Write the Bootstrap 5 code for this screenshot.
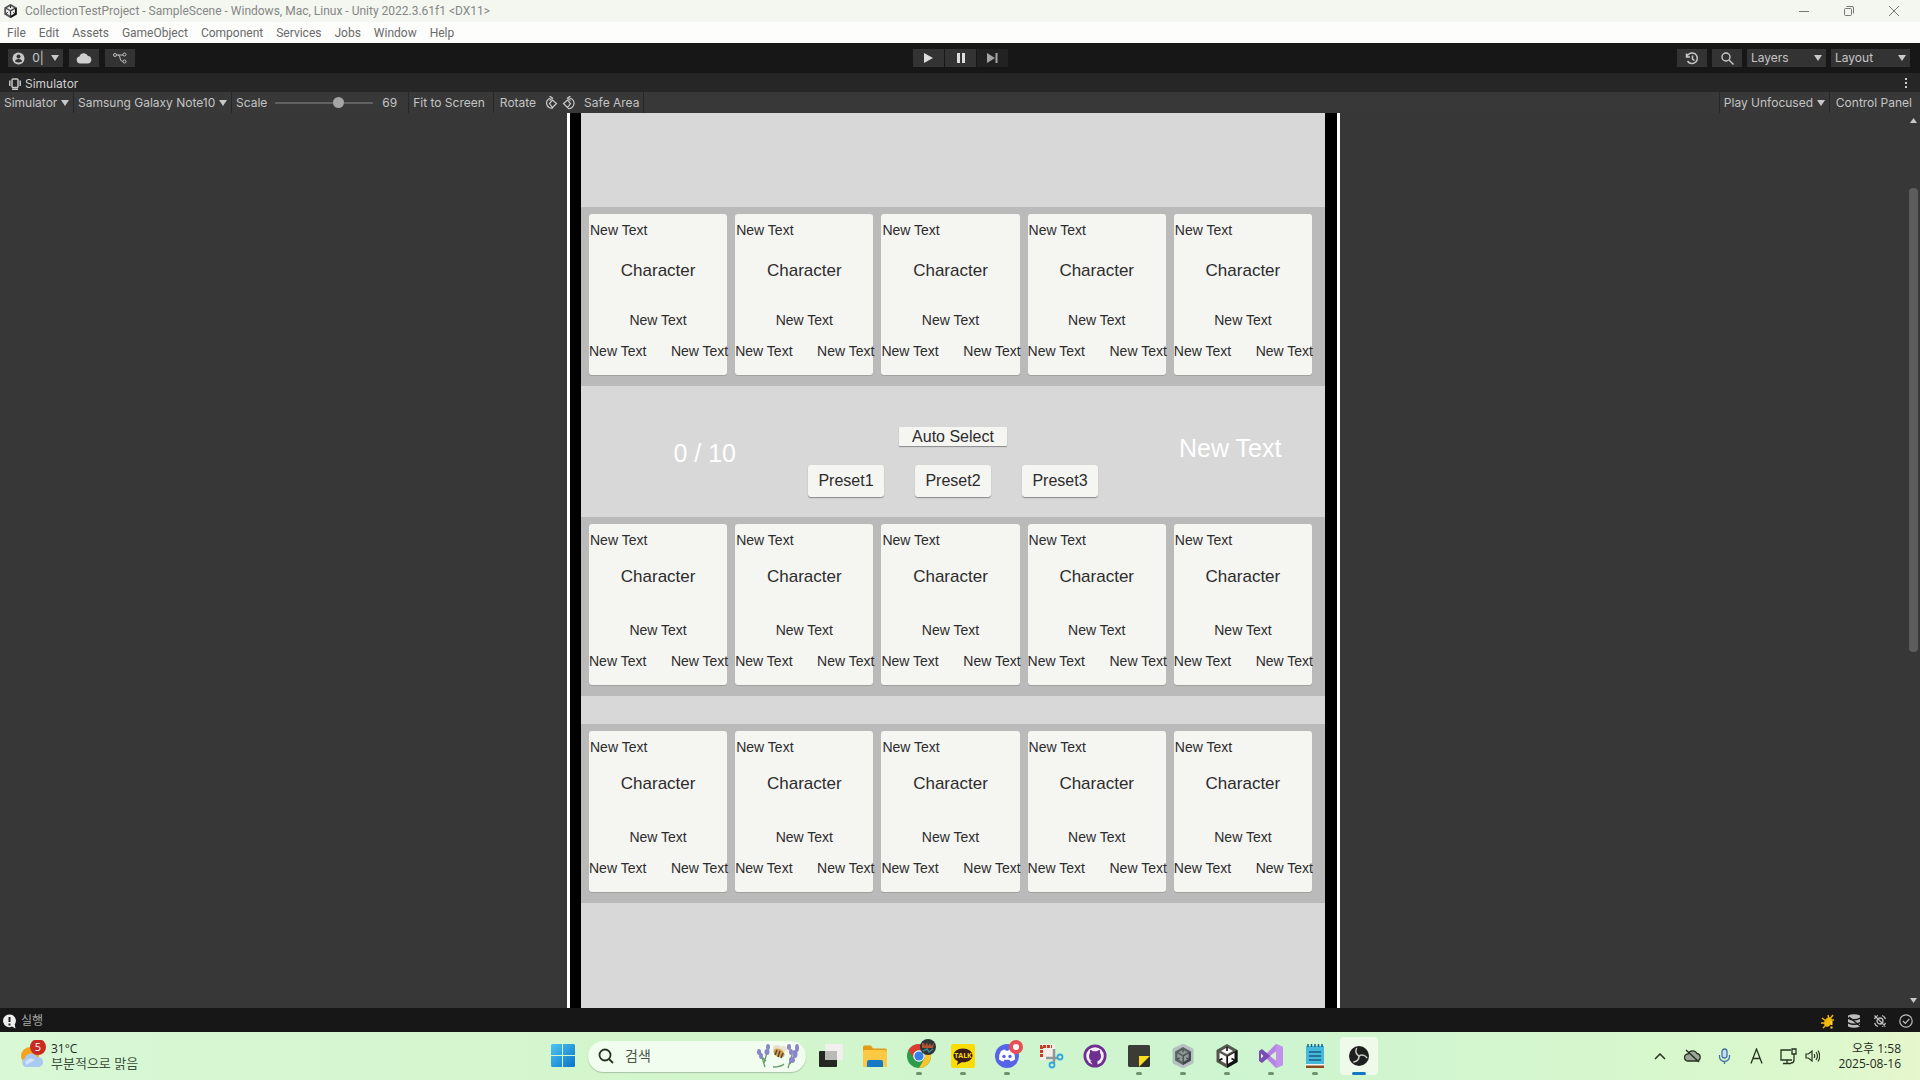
<!DOCTYPE html>
<html lang="ko">
<head>
<meta charset="utf-8">
<meta name="viewport" content="width=device-width, initial-scale=1">
<title>CollectionTestProject - SampleScene - Unity</title>
<link href="https://cdn.jsdelivr.net/npm/bootstrap@5.3.0/dist/css/bootstrap.min.css" rel="stylesheet">
<style>
body{font-family:Inter,"Noto Sans CJK KR",sans-serif;font-size:12px;line-height:16px;background:#373737;color:#c4c4c4}
svg{display:block;flex:none}
button,select{font:inherit;color:inherit;border:0;background:none;padding:0}
.win-font{font-family:"Open Sans","Noto Sans CJK KR",sans-serif}
.title-font{font-family:Roboto,"Noto Sans CJK KR",sans-serif}
.title-bar{height:22px;background:#f3f7f0;color:#868686}
.win-controls{gap:33px;padding-right:20px}
.menu-bar{height:21px;background:#fdfdfc;padding-left:7px;gap:13px}
.menu-bar a{color:#6a6a6a;text-decoration:none}
.editor-bar{height:30px;background:#171717;display:grid;grid-template-columns:1fr auto 1fr;align-items:center;padding:0 10px 0 8px}
.tool{height:18px;min-width:30px;background:#333333;display:flex;align-items:center;justify-content:center;color:#c8c8c8}
.tool.dim{background:#222;color:#999}
.tool.account{width:55px;padding:0 4px;justify-content:space-between}
.tool-group{gap:6px}
.tool-group.tight-group{gap:5px}
.play-tools{gap:1px;padding-left:3px}
.play-tools .tool{min-width:31px}
.pick{appearance:none;border-radius:0;background-image:url("data:image/svg+xml,%3Csvg xmlns='http://www.w3.org/2000/svg' width='8' height='6'%3E%3Cpath d='M0 0h8L4 6z' fill='%23c8c8c8'/%3E%3C/svg%3E");background-repeat:no-repeat;background-position:right 4px center}
.pick-box{width:79px;height:18px;background-color:#333333;padding-left:4px}
.tab-strip{height:19px;background:#262626;padding:2px 12px 0 9px;color:#cfcfcf}
.sim-bar{height:21px;background:#383838}
.sim-bar>*{height:21px;display:flex;align-items:center}
.sim-cell{padding:0 4px;border-right:1px solid #272727}
.sim-cell .pick{padding-right:11px;background-position:right 0 center}
.sim-scale{padding-right:11px}
.sim-rotate{padding:0 8px 0 6px}
.sim-scale input{appearance:none;width:98px;height:12px;background:linear-gradient(#606060,#606060) center/100% 2px no-repeat;margin:0 9px 0 8px}
.sim-scale input::-webkit-slider-thumb{appearance:none;width:11px;height:11px;border-radius:50%;background:#a5a5a5}
.sim-panel{padding:0 8px 0 6px}
.stage{background:#373737;min-height:0}
.device{max-width:773px;background:#000;border:solid #fff;border-width:0 3px;padding:0 12px 0 11px}
.screen-area{background:#d8d8d8;padding-top:94px;height:100%;font-family:"Liberation Sans",sans-serif;color:#2c2c2c}
.slot-row{background:#bababb;padding:7px 13px 11px 8px;gap:8px}
.slot-row+.slot-row{margin-top:28px}
.slot{flex:1 1 0;min-width:0;min-height:161px;background:#f5f5f2;border-radius:3px;box-shadow:0 1px 0 #a0a09c;padding:6px 0 14px;font-size:14px;line-height:20px;white-space:nowrap}
.slot-top{padding-left:1px}
.slot-name{font-size:17px;margin-top:17px}
.first-row .slot-name{margin-top:21px}
.slot-foot{margin-top:11px;margin-right:-1px}
.mid-zone{display:grid;grid-template-columns:1fr auto 1fr;height:131px;font-size:16px}
.big-text{font-size:25px;line-height:28px;color:#fff}
.count-text{padding:53px 72px 0 0}
.info-text{padding:48px 0 0 81px}
.ui-btn{background:#f5f5f2;border-radius:3px;box-shadow:0 1px 1px #8a8a8a;color:#2c2c2c}
.auto-btn{width:108px;height:19px;line-height:19px;border-radius:1px}
.preset-btn{width:76px;height:32px}
.mid-actions{padding-top:41px;gap:19px}
.preset-list{gap:31px}
.scroll-rail{width:13px;padding:5px 2px;color:#bbb}
.scroll-track{width:9px}
.scroll-thumb{height:53%;margin-top:65px;background:#5c5c5c;border-radius:4px}
.status-bar{height:24px;background:#171717;padding:2px 7px 0 3px;color:#a8a8a8}
.status-icons{gap:12px}
.task-bar{height:48px;background:linear-gradient(90deg,#d8f8d6,#d3f5cb 35%,#cdf5d0 65%,#dcf8cc 95%,#e6f6cd);display:grid;grid-template-columns:1fr auto 1fr;color:#1e2a1e}
.weather{padding-left:20px;gap:5px;line-height:15px}
.weather-note{font-size:13px;color:#3d4f3a}
.apps{padding-left:2px}
.app{width:44px;height:48px;display:flex;align-items:center;justify-content:center;position:relative}
.app.on::after{content:"";position:absolute;bottom:5px;left:19px;width:6px;height:3px;border-radius:2px;background:#71906e}
.app.active-app::before{content:"";position:absolute;inset:5px 3px;border-radius:4px;background:#effbea}
.app.active-app::after{width:14px;left:15px;background:#1478c4}
.app svg{position:relative}
.search-pill{width:218px;height:31px;border-radius:16px;background:#f1fdee;box-shadow:0 1px 1px #a9c4a5;padding:0 6px 0 10px;margin:0 3px;gap:11px}
.search-pill input{border:0;background:none;outline:0;padding:0;font-size:14px;color:#4a5548;min-width:0}
.search-pill input::placeholder{color:#4a5548;opacity:1}
.tray{padding-right:19px}
.tray-icon{width:32px;display:flex;justify-content:center}
.tray-icon.tight{width:16px}
.clock{line-height:15px;padding-left:18px}
.clock,.weather{font-size:12px}
</style>
<script src="https://cdn.jsdelivr.net/npm/bootstrap@5.3.0/dist/js/bootstrap.bundle.min.js"></script>
</head>
<body class="vh-100 d-flex flex-column overflow-hidden">
<svg width="0" height="0" class="position-absolute" aria-hidden="true">
  <symbol id="cube" viewBox="0 0 24 24"><path d="M12 0l10.500 6v12L12 24 1.500 18V6z" fill="var(--base)"/><path d="M22.500 6v12L12 24V12z" fill="var(--side)"/><path d="M12 3.500l6 3.400-6 3.400-6-3.400zM4.500 8.700l6.500 3.700v7.300l-6.500-3.700zM19.500 8.700L13 12.400v7.300l6.500-3.700z" fill="var(--face)"/><path d="M12 3v4M4 16.500l3.500-2M20 16.500l-3.500-2" stroke="var(--side)" stroke-width="1.600"/></symbol>
</svg>

<header>
  <div class="title-bar title-font d-flex align-items-center">
    <svg class="ms-1 me-2" width="13" height="16" viewBox="1 0 22 24" style="--base:#555;--side:#161616;--face:#eee"><use href="#cube" width="24" height="24"/></svg>
    <span class="flex-grow-1">CollectionTestProject - SampleScene - Windows, Mac, Linux - Unity 2022.3.61f1 &lt;DX11&gt;</span>
    <div class="win-controls d-flex align-items-center">
      <button aria-label="Minimize"><svg width="12" height="12" stroke="#777" fill="none"><path d="M1 6.500h10"/></svg></button>
      <button aria-label="Restore"><svg width="12" height="12" stroke="#777" fill="none"><rect x="1.500" y="3.500" width="7" height="7" rx="1"/><path d="M3.500 1.500H9a1.500 1.500 0 0 1 1.500 1.500v5.500"/></svg></button>
      <button aria-label="Close"><svg width="12" height="12" stroke="#777" fill="none"><path d="M1 1l10 10M11 1L1 11"/></svg></button>
    </div>
  </div>
  <nav class="menu-bar title-font d-flex align-items-center">
    <a href="#">File</a><a href="#">Edit</a><a href="#">Assets</a><a href="#">GameObject</a><a href="#">Component</a><a href="#">Services</a><a href="#">Jobs</a><a href="#">Window</a><a href="#">Help</a>
  </nav>
  <div class="editor-bar">
    <div class="tool-group d-flex">
      <button class="tool account"><svg width="13" height="13" viewBox="0 0 13 13"><circle cx="6.500" cy="6.500" r="6" fill="#c8c8c8"/><circle cx="6.500" cy="4.500" r="2" fill="#333"/><path d="M3 9.500q0-2.500 3.500-2.500t3.500 2.500q-3.500 2-7 0z" fill="#333"/></svg><span>0|</span><svg width="8" height="6"><path d="M0 0h8L4 6z" fill="#c8c8c8"/></svg></button>
      <button class="tool" aria-label="Cloud"><svg width="16" height="12" viewBox="0 0 16 12"><path d="M4 11.500a3.500 3.500 0 0 1-.6-6.900A4.600 4.600 0 0 1 12 4a3.800 3.800 0 0 1 .3 7.500z" fill="#d0d0d0"/></svg></button>
      <button class="tool" aria-label="Version control"><svg width="14" height="12" viewBox="0 0 14 12" fill="none" stroke="#c0c0c0"><circle cx="2" cy="3" r="1.500"/><circle cx="11.500" cy="2.500" r="1.500"/><circle cx="11.500" cy="9.500" r="1.500"/><path d="M3.500 3H10M5 3q2 0 2 3t3 3.500"/></svg></button>
    </div>
    <div class="play-tools d-flex">
      <button class="tool" aria-label="Play"><svg width="9" height="10"><path d="M0 0l9 5-9 5z" fill="#ddd"/></svg></button>
      <button class="tool" aria-label="Pause"><svg width="8" height="10"><path d="M0 0h3v10H0zM5 0h3v10H5z" fill="#ddd"/></svg></button>
      <button class="tool dim" aria-label="Step"><svg width="11" height="10"><path d="M0 0l8 5-8 5zM8.500 0h2v10h-2z" fill="#a5a5a5"/></svg></button>
    </div>
    <div class="tool-group tight-group d-flex justify-content-end">
      <button class="tool" aria-label="Undo history"><svg width="14" height="13" viewBox="0 0 14 13" fill="none" stroke="#c8c8c8" stroke-width="1.500"><path d="M2 4.500A5.300 5.300 0 1 1 2.500 9M1.500 1.500v3.500H5M7.500 3.500v3.500l2 1.500"/></svg></button>
      <button class="tool" aria-label="Search"><svg width="13" height="13" viewBox="0 0 13 13" fill="none" stroke="#c8c8c8" stroke-width="1.400"><circle cx="5" cy="5" r="4"/><path d="M8 8l4.500 4.500"/></svg></button>
      <select class="pick pick-box" aria-label="Layers"><option>Layers</option></select>
      <select class="pick pick-box" aria-label="Layout"><option>Layout</option></select>
    </div>
  </div>
  <div class="tab-strip d-flex align-items-center justify-content-between">
    <div class="d-flex align-items-center gap-1"><svg width="12" height="12" viewBox="0 0 12 12" fill="none" stroke="#c8c8c8" stroke-width="1.500"><rect x="3" y="1" width="6" height="8.500" rx="1"/><path d="M.8 2.500v5.500M11.200 2.500v5.500M3 11.200h6"/></svg><span>Simulator</span></div>
    <button aria-label="More"><svg width="3" height="11" fill="#ccc"><path d="M0 0h2v2H0zM0 4h2v2H0zM0 8h2v2H0z"/></svg></button>
  </div>
  <div class="sim-bar d-flex">
    <div class="sim-cell"><select class="pick" aria-label="View"><option>Simulator</option></select></div>
    <div class="sim-cell"><select class="pick" aria-label="Device"><option>Samsung Galaxy Note10</option></select></div>
    <div class="sim-cell sim-scale"><label for="scale">Scale</label><input id="scale" type="range" min="0" max="100" value="66"><span>69</span></div>
    <div class="sim-cell pe-2"><button>Fit to Screen</button></div>
    <div class="sim-rotate"><span class="me-2">Rotate</span>
      <button class="me-1" aria-label="Rotate right"><svg width="14" height="14" viewBox="0 0 14 14" fill="none" stroke="#c8c8c8" stroke-width="1.200"><path d="M6.500 2A5 5 0 1 0 9 12M5.500 0l3 2-3 2.500M8.500 4l4 3.500-4 4-3-4z"/></svg></button>
      <button aria-label="Rotate left"><svg width="14" height="14" viewBox="0 0 14 14" fill="none" stroke="#c8c8c8" stroke-width="1.200"><path d="M7.500 2A5 5 0 1 1 6 12.500M8.500 0l-3 2 3 2.500M5.500 4l-4 3.500 4 4 3-4z"/></svg></button></div>
    <div class="sim-cell ps-0"><button>Safe Area</button></div>
    <div class="sim-cell flex-grow-1"></div>
    <div class="sim-cell"><select class="pick" aria-label="Play mode"><option>Play Unfocused</option></select></div>
    <div class="sim-panel"><button>Control Panel</button></div>
  </div>
</header>

<main class="stage flex-grow-1 d-flex overflow-hidden">
  <div class="flex-grow-1 d-flex justify-content-center">
    <div class="device w-100">
      <div class="screen-area" id="screen">
        <section class="slot-row first-row d-flex"></section>
        <section class="mid-zone">
          <div class="big-text count-text text-end">0 / 10</div>
          <div class="mid-actions d-flex flex-column align-items-center">
            <button class="ui-btn auto-btn">Auto Select</button>
            <div class="preset-list d-flex"><button class="ui-btn preset-btn">Preset1</button><button class="ui-btn preset-btn">Preset2</button><button class="ui-btn preset-btn">Preset3</button></div>
          </div>
          <div class="big-text info-text">New Text</div>
        </section>
        <section class="slot-row d-flex"></section>
        <section class="slot-row d-flex"></section>
      </div>
    </div>
  </div>
  <div class="scroll-rail d-flex flex-column align-items-center">
    <svg width="7" height="5"><path d="M0 5h7L3.500 0z" fill="#c8c8c8"/></svg>
    <div class="scroll-track flex-grow-1"><div class="scroll-thumb"></div></div>
    <svg width="7" height="5"><path d="M0 0h7L3.500 5z" fill="#c8c8c8"/></svg>
  </div>
</main>

<footer>
  <div class="status-bar d-flex align-items-center justify-content-between">
    <div class="d-flex align-items-center gap-1"><svg width="14" height="15" viewBox="0 0 14 15"><path d="M6.500.5a6.300 6.300 0 1 0 2.500 12l3.500 2-.8-4A6.300 6.300 0 0 0 6.500.5z" fill="#eee"/><path d="M6.500 3v5M6.500 9.500v2" stroke="#222" stroke-width="2"/></svg><span>실행</span></div>
    <div class="status-icons d-flex align-items-center">
      <svg width="14" height="15" viewBox="0 0 14 15"><ellipse cx="7" cy="8" rx="3.500" ry="5" fill="#f5b80c" transform="rotate(25 7 8)"/><path d="M1 4l4 3M0 9h5M2 14l3-3M7 1l1 4M12 1l-3 4M13 6H9" stroke="#f5b80c" stroke-width="1.400"/><path d="M10.500 7v4M10.500 12.500v2" stroke="#ffd23c" stroke-width="2"/></svg>
      <svg width="14" height="14" viewBox="0 0 14 14"><path d="M1 1.500q6-2.500 12 0v2q-6 3-12 0zM1 5q6 3 12 0v3q-6 3-12 0zM1 9.500q6 3 12 0v3q-6 2.500-12 0z" fill="#bdbdbd"/><path d="M2 3l11 9" stroke="#171717" stroke-width="1.300"/></svg>
      <svg width="14" height="14" viewBox="0 0 14 14" fill="none" stroke="#bdbdbd" stroke-width="1.300"><path d="M1.500 5A6 6 0 0 1 5 1.500M9 1.500A6 6 0 0 1 12.500 5M12.500 9A6 6 0 0 1 9 12.500M5 12.500A6 6 0 0 1 1.500 9M1.500 1.500l11 11"/><circle cx="7" cy="7" r="3"/></svg>
      <svg width="14" height="14" viewBox="0 0 14 14" fill="none" stroke="#bdbdbd" stroke-width="1.200"><circle cx="7" cy="7" r="6.200"/><path d="M4 7l2.300 2.300L10.300 5"/></svg>
    </div>
  </div>

  <div class="task-bar win-font">
    <div class="weather d-flex align-items-center">
      <svg width="26" height="32" viewBox="0 0 26 32"><circle cx="10" cy="16" r="9" fill="#f5a31c"/><path d="M5 27a5 5 0 0 1 0-9 6.500 6.500 0 0 1 12-1 5 5 0 0 1 2 10z" fill="#a9c8f2"/><path d="M6 25a4 4 0 0 1 1-5 6 6 0 0 1 8 0" fill="#d2e3fa"/><circle cx="18" cy="7" r="8" fill="#c92b20"/><text x="18" y="11" text-anchor="middle" font-size="11" fill="#fff">5</text></svg>
      <div><div>31°C</div><div class="weather-note">부분적으로 맑음</div></div>
    </div>
    <div class="apps d-flex align-items-center">
      <button class="app" aria-label="Start"><svg width="24" height="24" viewBox="0 0 24 24"><defs><linearGradient id="w" x1="0" y1="0" x2="1" y2="1"><stop stop-color="#4fc5f2"/><stop offset="1" stop-color="#0a73c9"/></linearGradient></defs><path d="M1 0h10v11H0V1zM12 0h11l1 1v10H12zM0 12h11v11H1l-1-1zM12 12h12v10l-1 1H12z" fill="url(#w)"/></svg></button>
      <div class="search-pill d-flex align-items-center">
        <svg width="16" height="16" viewBox="0 0 16 16" fill="none" stroke="#26331f" stroke-width="1.800"><circle cx="7" cy="7" r="5.500"/><path d="M11 11l4 4"/></svg>
        <input class="flex-grow-1" type="search" placeholder="검색" aria-label="검색">
        <svg width="44" height="26" viewBox="0 0 44 26"><path d="M4 8l5 16M13 3L8 20M6 14l4 4M36 12l-4 13M41 6l-7 15M17 24q8 0 11-3" stroke="#6a9a6c" stroke-width="1.300" fill="none"/><g fill="#8c86c8"><ellipse cx="3" cy="9" rx="2" ry="3"/><ellipse cx="5" cy="13" rx="2" ry="3"/><ellipse cx="12" cy="4" rx="2" ry="3"/><ellipse cx="11" cy="9" rx="2.500" ry="3"/><ellipse cx="33" cy="4" rx="2" ry="3"/><ellipse cx="35" cy="9" rx="2" ry="3"/><ellipse cx="41" cy="5" rx="2" ry="4"/><ellipse cx="39" cy="11" rx="2.500" ry="4"/><ellipse cx="36" cy="17" rx="3" ry="3"/></g><ellipse cx="21" cy="5" rx="4" ry="3" fill="#e6dfcc"/><ellipse cx="27" cy="6" rx="4" ry="3" fill="#e9e3d2"/><ellipse cx="23" cy="10" rx="6" ry="4" fill="#d5a253" transform="rotate(30 23 10)"/><path d="M21 7l-2 5M24 8l-2 6M27 10l-2 5" stroke="#5d4330" stroke-width="1.500"/></svg>
      </div>
      <button class="app" aria-label="Task view"><svg width="26" height="24" viewBox="0 0 26 24"><rect x="7" y="0" width="18" height="16" rx="1" fill="#f3efee"/><rect x="1" y="7" width="18" height="16" rx="1" fill="#252722"/><rect x="7" y="7" width="12" height="9" fill="#b8bab8"/></svg></button>
      <button class="app" aria-label="File Explorer"><svg width="24" height="23" viewBox="0 0 24 23"><path d="M0 2q0-1.500 1.500-1.500H8l2 3h12q2 0 2 2V20q0 2-2 2H2q-2 0-2-2z" fill="#e49b12"/><path d="M0 7q0-2 2-2h20q2 0 2 2v13q0 2-2 2H2q-2 0-2-2z" fill="#fbc944"/><path d="M4 22v-5q0-2 2-2h12q2 0 2 2v5z" fill="#1478c4"/></svg></button>
      <button class="app on" aria-label="Chrome"><svg width="34" height="36" viewBox="0 0 34 36"><circle cx="17" cy="18" r="12" fill="#2b9c48"/><path d="M6.600 12A12 12 0 0 1 27.400 12H17a6 6 0 0 0-5.200 9z" fill="#de3b2e"/><path d="M27.400 12A12 12 0 0 1 17 30l5.200-9A6 6 0 0 0 17 12z" fill="#f8c52c"/><circle cx="17" cy="18" r="5.800" fill="#fff"/><circle cx="17" cy="18" r="4.600" fill="#357fe6"/><circle cx="26" cy="9" r="8" fill="#2d3536"/><path d="M20 5h2l1 3 2-4 1 4 2-3 1 3 3-3-1 5H20z" fill="#b0552f"/><path d="M21 13l4-2 2 3 4-3" stroke="#3d8890" stroke-width="1.500" fill="none"/></svg></button>
      <button class="app on" aria-label="KakaoTalk"><svg width="24" height="24" viewBox="0 0 24 24"><rect width="24" height="24" rx="2" fill="#fbdc06"/><path d="M12 4.500c-5.500 0-9.500 3-9.500 7 0 2.500 1.800 4.600 4.500 5.800L6 21l4.500-2.700c7 .3 11-2.800 11-6.800s-4-7-9.500-7z" fill="#3a1d18"/><text x="12" y="14" text-anchor="middle" font-size="7" font-weight="700" fill="#fbdc06">TALK</text></svg></button>
      <button class="app on" aria-label="Discord"><svg width="34" height="36" viewBox="0 0 34 36"><circle cx="17" cy="18" r="12" fill="#5564e8"/><path d="M11 13q2-1.500 4-1.500l.8 1.200h2.400l.8-1.200q2 0 4 1.500 2.500 4 2 8.500-2 1.600-4.500 2l-1-1.700h-5l-1 1.700q-2.500-.4-4.500-2-.5-4.500 2-8.500z" fill="#fff"/><circle cx="14" cy="18.500" r="1.700" fill="#5564e8"/><circle cx="20" cy="18.500" r="1.700" fill="#5564e8"/><circle cx="26" cy="9" r="5" fill="#fff" stroke="#e94e55" stroke-width="4"/></svg></button>
      <button class="app" aria-label="Snipping Tool"><svg width="26" height="26" viewBox="0 0 26 26"><rect x="2" y="1" width="15" height="16" fill="#f5ede8"/><path d="M3.500 14V3.500H14" stroke="#c93c1d" stroke-width="3" stroke-dasharray="3 1" fill="none"/><path d="M16 6v14M8 15h12" stroke="#8e9696" stroke-width="2.500"/><circle cx="22" cy="14" r="2.500" fill="none" stroke="#32a7dd" stroke-width="1.800"/><circle cx="14" cy="22" r="2.500" fill="none" stroke="#32a7dd" stroke-width="1.800"/></svg></button>
      <button class="app" aria-label="GitHub Desktop"><svg width="24" height="24" viewBox="0 0 24 24"><circle cx="12" cy="12" r="11.500" fill="#6e2f91"/><circle cx="12" cy="12" r="8.800" fill="#f5edf8"/><path d="M9.500 20.500V17q-3 .5-3.500-2M14.500 20.500V17q3.500-.8 3.500-5 0-2-1-3 .3-1.500-.2-3-1.300 0-2.800 1.200h-4Q8.500 6 7.200 6q-.5 1.500-.2 3-1 1-1 3 0 4.200 3.500 5v4h5z" fill="#6e2f91"/></svg></button>
      <button class="app on" aria-label="Sticky Notes"><svg width="22" height="22" viewBox="0 0 22 22"><path d="M1 0h20l1 1v10L11 22H1l-1-1V1z" fill="#3b3c35"/><path d="M11 11h11L11 22z" fill="#fbdc1c"/><path d="M22 11v10l-1 1H11z" fill="#2d2f29"/></svg></button>
      <button class="app on" aria-label="Unity Hub"><svg width="22" height="24" viewBox="0 0 22 24" style="--base:#59625f;--side:#3f474a;--face:#8f9a9c"><path d="M11 0l10 5v14l-10 5-10-5V5z" fill="#b4c0c1" stroke="#b4c0c1" stroke-linejoin="round"/><use href="#cube" x="2" y="3" width="18" height="18"/></svg></button>
      <button class="app on" aria-label="Unity"><svg width="24" height="24" viewBox="0 0 24 24" style="--base:#56574c;--side:#121212;--face:#f8f8f8"><use href="#cube" width="24" height="24"/></svg></button>
      <button class="app on" aria-label="Visual Studio"><svg width="24" height="24" viewBox="0 0 24 24"><path d="M17 0l7 3v18l-7 3L6 13v-2z" fill="#b583e6"/><path d="M0 7l3-2 14 12V7L3 19l-3-2z" fill="#7b4bb4"/><path d="M17 7v10l-6-5z" fill="#d8f0d0"/><path d="M17 0l7 3v18l-7 3z" fill="#c092ec"/><path d="M2 9.500v5L4.500 12z" fill="#d8f0d0"/></svg></button>
      <button class="app on" aria-label="Notepad"><svg width="20" height="24" viewBox="0 0 20 24"><rect x="1" y="2" width="18" height="20" fill="#45b8dc"/><path d="M1 21h18v3H1z" fill="#8d4a20"/><path d="M1 20h18v1.500H1z" fill="#f5f5f0"/><path d="M3 0v3M6.500 0v3M10 0v3M13.500 0v3M17 0v3M4 8h12M4 12h12M4 16h12" stroke="#155e80" stroke-width="1.500"/></svg></button>
      <button class="app on active-app" aria-label="OBS Studio"><svg width="22" height="22" viewBox="0 0 22 22"><defs><path id="blade" d="M11 11Q6.500 8.500 8.500 3.500"/></defs><circle cx="11" cy="11" r="10" fill="#1e1f1e"/><g stroke="#c4cac2" stroke-width="1.500" stroke-linecap="round" fill="none"><use href="#blade"/><use href="#blade" transform="rotate(120 11 11)"/><use href="#blade" transform="rotate(240 11 11)"/></g></svg></button>
    </div>
    <div class="tray d-flex align-items-center justify-content-end">
      <span class="tray-icon"><svg width="12" height="7" fill="none" stroke="#26331f" stroke-width="1.500"><path d="M1 6l5-5 5 5"/></svg></span>
      <span class="tray-icon"><svg width="17" height="14" viewBox="0 0 17 14"><path d="M4 12a3.500 3.500 0 0 1 0-7 5 5 0 0 1 9-.5 3.800 3.800 0 0 1 0 7.500z" fill="#9ca59a" stroke="#26331f" stroke-width="1.300"/><path d="M2 1l13 12" stroke="#26331f" stroke-width="1.500"/></svg></span>
      <span class="tray-icon"><svg width="13" height="17" viewBox="0 0 13 17" fill="none" stroke="#4272a5" stroke-width="1.300"><rect x="4" y="1" width="5" height="9" rx="2.500" fill="#c1dff0"/><path d="M1.500 7v1.500a5 5 0 0 0 10 0V7M6.500 13.500V16"/></svg></span>
      <span class="tray-icon"><svg width="13" height="16" viewBox="0 0 13 16" fill="none" stroke="#26331f" stroke-width="1.300"><path d="M1 15.500L6.500 1 12 15.500M3 10.500h7"/></svg></span>
      <span class="tray-icon"><svg width="17" height="17" viewBox="0 0 17 17" fill="none" stroke="#26331f" stroke-width="1.300"><path d="M11 2H1v10h11M3 15.500h8M7 12v3.500M14 6v6q0 3-3 3M12 1h4v5h-4z"/></svg></span>
      <span class="tray-icon tight"><svg width="15" height="14" viewBox="0 0 15 14" fill="none" stroke="#26331f" stroke-width="1.200"><path d="M1 5h2.500L7 2v10L3.500 9H1zM9 5q1.500 2 0 4M11 3q3 4 0 8M13 1.500q3.500 5.500 0 11"/></svg></span>
      <div class="clock text-end"><div>오후 1:58</div><div>2025-08-16</div></div>
    </div>
  </div>
</footer>
<script>
const slot = `<div class="slot d-flex flex-column">
  <div class="slot-top">New Text</div>
  <div class="slot-name text-center">Character</div>
  <div class="text-center mt-auto">New Text</div>
  <div class="slot-foot d-flex justify-content-between"><span>New Text</span><span>New Text</span></div>
</div>`;
document.querySelectorAll('.slot-row').forEach(row => { row.innerHTML = slot.repeat(5); });
</script>
</body>
</html>
